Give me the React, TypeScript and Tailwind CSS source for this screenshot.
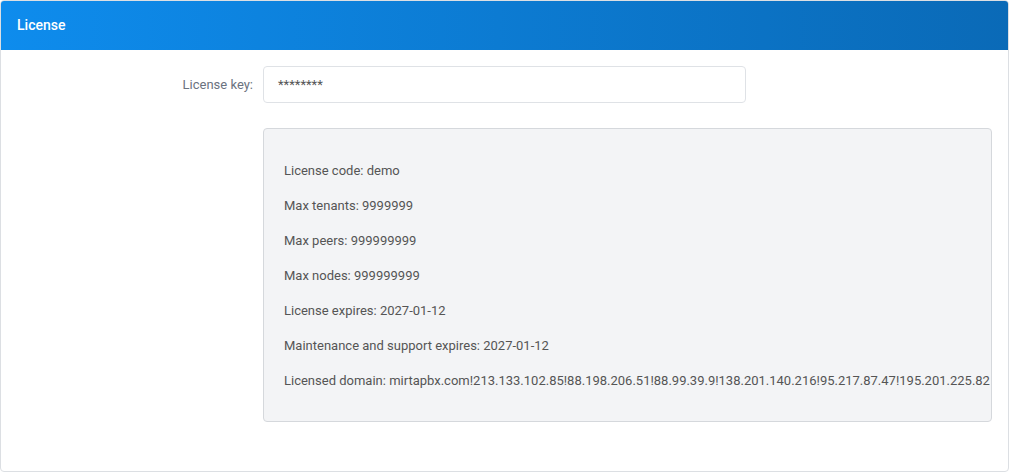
export default function App() {
  const lines = [
    "License code: demo",
    "Max tenants: 9999999",
    "Max peers: 999999999",
    "Max nodes: 999999999",
    "License expires: 2027-01-12",
    "Maintenance and support expires: 2027-01-12",
    "Licensed domain: mirtapbx.com!213.133.102.85!88.198.206.51!88.99.39.9!138.201.140.216!95.217.87.47!195.201.225.82",
  ];
  return (
    <div className="w-[1010px] h-[472px] bg-white" style={{ fontFamily: "Roboto, sans-serif" }}>
      <div className="w-[1009px] h-[472px] border border-[#dcdfe3] rounded-[4px] overflow-hidden">
        <div className="h-[49px] bg-gradient-to-r from-[#0e8ced] to-[#0a6ab7] flex items-center px-[16px] text-white text-[14px] font-medium">
          License
        </div>
        <div className="flex pt-[16px]">
          <div className="w-[262px] pr-[10px] h-[37px] flex items-center justify-end text-[13px] text-[#6b7280]">License key:</div>
          <div className="w-[483px] h-[37px] border border-[#dfe2e6] rounded-[4px] flex items-center px-[14px] text-[13px] text-[#555]">********</div>
        </div>
        <div className="ml-[262px] mt-[25px] w-[729px] h-[294px] bg-[#f3f4f6] border border-[#d5d8dc] rounded-[4px] pt-[32px] px-[20px] flex flex-col gap-[15px] text-[13px] text-[#555]">
          {lines.map((l) => (
            <div key={l} className="h-[20px] leading-[20px] whitespace-nowrap">{l}</div>
          ))}
        </div>
      </div>
    </div>
  );
}
